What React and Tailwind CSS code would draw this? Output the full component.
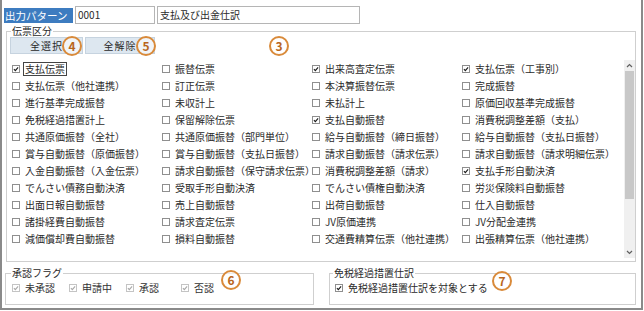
import React from 'react';

// 伝票区分の一覧（行ごとに4列）
const rows = [
  [['支払伝票', true], ['振替伝票'], ['出来高査定伝票', true], ['支払伝票（工事別）', true]],
  [['支払伝票（他社連携）'], ['訂正伝票'], ['本決算振替伝票'], ['完成振替']],
  [['進行基準完成振替'], ['未収計上'], ['未払計上'], ['原価回収基準完成振替']],
  [['免税経過措置計上'], ['保留解除伝票'], ['支払自動振替', true], ['消費税調整差額（支払）']],
  [['共通原価振替（全社）'], ['共通原価振替（部門単位）'], ['給与自動振替（締日振替）'], ['給与自動振替（支払日振替）']],
  [['賞与自動振替（原価振替）'], ['賞与自動振替（支払日振替）'], ['請求自動振替（請求伝票）'], ['請求自動振替（請求明細伝票）']],
  [['入金自動振替（入金伝票）'], ['請求自動振替（保守請求伝票）'], ['消費税調整差額（請求）'], ['支払手形自動決済', true]],
  [['でんさい債務自動決済'], ['受取手形自動決済'], ['でんさい債権自動決済'], ['労災保険料自動振替']],
  [['出面日報自動振替'], ['売上自動振替'], ['出荷自動振替'], ['仕入自動振替']],
  [['諸掛経費自動振替'], ['請求査定伝票'], ['JV原価連携'], ['JV分配金連携']],
  [['減価償却費自動振替'], ['損料自動振替'], ['交通費精算伝票（他社連携）'], ['出張精算伝票（他社連携）']],
];

const Box = ({ checked, disabled }) => (
  <span
    className={`w-[8px] h-[8px] shrink-0 border flex items-center justify-center bg-white ${
      disabled ? 'border-[#c4c4c4]' : 'border-[#8f8f8f]'
    }`}
  >
    {checked && (
      <svg width="8" height="8" viewBox="0 0 8 8">
        <path
          d="M1.2 4.2 L3.1 6.1 L6.8 1.8"
          fill="none"
          stroke={disabled ? '#a8a8a8' : '#1a1a1a'}
          strokeWidth="1.5"
        />
      </svg>
    )}
  </span>
);

const Mark = ({ n, className }) => (
  <span
    className={`absolute w-[20px] h-[20px] rounded-full border-2 border-[#d98a3a] bg-white/60 flex items-center justify-center text-[12px] font-bold text-[#b8651c] leading-none ${className}`}
  >
    {n}
  </span>
);

const App = () => {
  return (
    <div
      className="w-[644px] h-[311px] bg-white relative text-[#2a2a2a]"
      style={{ fontFamily: '"Noto Sans CJK JP", "Noto Sans", sans-serif' }}
    >
      <div className="w-[643px] h-[310px] border-l-2 border-r-2 border-b-2 border-[#8a8a8a]">
        {/* 出力パターン */}
        <div className="flex items-center pt-[6px] pl-[2px] h-[24px]">
          <div className="w-[69px] h-[15px] bg-[#3d7cc0] text-white text-[10.5px] leading-[15px] pl-[1px]">
            出力パターン
          </div>
          <div className="ml-[2px] w-[80px] h-[18px] border border-[#b5b5b5] text-[10px] leading-[16px] pl-[2px]">
            0001
          </div>
          <div className="ml-[2px] w-[203px] h-[18px] border border-[#b5b5b5] text-[10px] leading-[16px] pl-[2px]">
            支払及び出金仕訳
          </div>
        </div>

        {/* 伝票区分 */}
        <fieldset className="ml-[4px] mt-[1px] w-[630px] h-[237px] border border-[#cfcfcf]">
          <legend className="ml-[4px] px-[1px] text-[10px] leading-[12px]">伝票区分</legend>
          <div className="flex pl-[3px] gap-[2px]">
            <button className="w-[73px] h-[17px] bg-[#dde7f0] border border-[#c6d3df] text-[10px] leading-[15px] tracking-[1px]">
              全選択
            </button>
            <button className="w-[70px] h-[17px] bg-[#dde7f0] border border-[#c6d3df] text-[10px] leading-[15px] tracking-[1px]">
              全解除
            </button>
          </div>
          <div className="flex mt-[6px]">
            <div className="w-[616px] pl-[5px]">
              {rows.map((row, r) => (
                <div key={r} className="flex h-[17px]">
                  {row.map(([label, checked], c) => (
                    <div key={c} className="w-[150px] flex items-center gap-[3px] text-[10px] whitespace-nowrap">
                      <Box checked={checked} />
                      <span
                        className={
                          r === 0 && c === 0
                            ? 'border border-[#444] px-[1px] leading-[12px]'
                            : 'px-[2px] leading-[12px]'
                        }
                      >
                        {label}
                      </span>
                    </div>
                  ))}
                </div>
              ))}
            </div>
            <div className="w-[11px] h-[198px] ml-[1px] bg-[#f0f0f0] flex flex-col">
              <div className="h-[11px] flex items-center justify-center">
                <svg width="7" height="5" viewBox="0 0 7 5">
                  <path d="M1 4 L3.5 1.5 L6 4" fill="none" stroke="#606060" strokeWidth="1.2" />
                </svg>
              </div>
              <div className="h-[128px] mx-[1px] bg-[#c8c8c8]" />
              <div className="flex-1" />
              <div className="h-[11px] flex items-center justify-center">
                <svg width="7" height="5" viewBox="0 0 7 5">
                  <path d="M1 1 L3.5 3.5 L6 1" fill="none" stroke="#606060" strokeWidth="1.2" />
                </svg>
              </div>
            </div>
          </div>
        </fieldset>

        {/* 下段 */}
        <div className="flex ml-[3px] mt-[5px] gap-[15px]">
          <fieldset className="w-[309px] h-[38px] border border-[#cfcfcf]">
            <legend className="ml-[5px] px-[1px] text-[10px] leading-[12px]">承認フラグ</legend>
            <div className="flex h-[17px] items-center pl-[6px] text-[10px] text-[#333]">
              {['未承認', '申請中', '承認', '否認'].map((t, i) => (
                <div key={t} className={`flex items-center gap-[5px] ${i === 2 ? 'w-[55px]' : 'w-[57px]'}`}>
                  <Box checked disabled />
                  <span>{t}</span>
                </div>
              ))}
            </div>
          </fieldset>
          <fieldset className="w-[307px] h-[38px] border border-[#cfcfcf]">
            <legend className="ml-[3px] px-[1px] text-[10px] leading-[12px]">免税経過措置仕訳</legend>
            <div className="flex h-[17px] items-center pl-[5px] gap-[5px] text-[10px]">
              <Box checked />
              <span>免税経過措置仕訳を対象とする</span>
            </div>
          </fieldset>
        </div>
      </div>

      <Mark n="4" className="left-[62px] top-[36px]" />
      <Mark n="5" className="left-[136px] top-[36px]" />
      <Mark n="3" className="left-[269px] top-[36px]" />
      <Mark n="6" className="left-[221px] top-[270px]" />
      <Mark n="7" className="left-[492px] top-[271px]" />
    </div>
  );
};

export default App;
